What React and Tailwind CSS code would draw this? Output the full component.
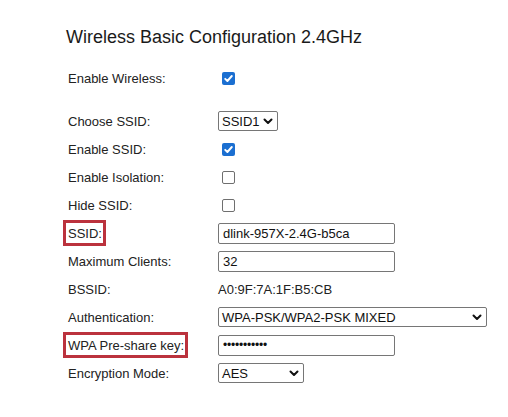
import React from "react";

function Chevron() {
  return (
    <svg width="10" height="7" viewBox="0 0 10 7" className="shrink-0">
      <path d="M1.5 1.5 L5 5 L8.5 1.5" fill="none" stroke="#111" strokeWidth="2" strokeLinecap="round" strokeLinejoin="round" />
    </svg>
  );
}

function Check({ checked }) {
  if (checked) {
    return (
      <span className="flex h-[13px] w-[13px] items-center justify-center rounded-[2px] bg-[#1b6fd1]">
        <svg width="11" height="11" viewBox="0 0 11 11">
          <path d="M2.2 5.8 L4.4 8 L8.8 3" fill="none" stroke="#fff" strokeWidth="1.9" strokeLinecap="round" strokeLinejoin="round" />
        </svg>
      </span>
    );
  }
  return <span className="block h-[13px] w-[13px] rounded-[2px] border border-[#6f6f6f] bg-white" />;
}

function Select({ value, width }) {
  return (
    <div
      className={`flex h-[20px] items-center justify-between rounded-[2px] border border-[#767676] bg-white pl-[3px] pr-[4px] text-[13px] text-[#111] ${width}`}
    >
      <span>{value}</span>
      <Chevron />
    </div>
  );
}

function TextBox({ children }) {
  return (
    <div className="flex h-[21px] w-[177px] items-center rounded-[2px] border border-[#767676] bg-white pl-[4px] text-[13px] text-[#111]">
      {children}
    </div>
  );
}

function Label({ children, boxed }) {
  return (
    <div className="w-[150px] shrink-0">
      <span className="relative inline-block">
        {children}
        {boxed && (
          <span className="absolute -left-[5px] -right-[4px] top-1/2 h-[26px] -translate-y-1/2 border-[3px] border-[#bb323d]" />
        )}
      </span>
    </div>
  );
}

function Row({ label, boxed, children }) {
  return (
    <div className="flex h-[28px] items-center">
      <Label boxed={boxed}>{label}</Label>
      <div className="flex items-center">{children}</div>
    </div>
  );
}

export default function App() {
  return (
    <div
      className="h-[417px] w-[508px] overflow-hidden bg-white text-[13px] leading-[15px] text-[#222]"
      style={{ fontFamily: '"Liberation Sans", Arial, sans-serif' }}
    >
      <div className="pl-[66px] pt-[28px] text-[18px] leading-[18px] text-[#1a1a1a]">
        Wireless Basic Configuration 2.4GHz
      </div>
      <div className="pl-[68px] pt-[18px]">
        <Row label="Enable Wireless:">
          <span className="ml-[4px]"><Check checked /></span>
        </Row>
        <div className="h-[15px]" />
        <Row label="Choose SSID:">
          <Select value="SSID1" width="w-[60px]" />
        </Row>
        <Row label="Enable SSID:">
          <span className="ml-[4px]"><Check checked /></span>
        </Row>
        <Row label="Enable Isolation:">
          <span className="ml-[4px]"><Check /></span>
        </Row>
        <Row label="Hide SSID:">
          <span className="ml-[4px]"><Check /></span>
        </Row>
        <Row label="SSID:" boxed>
          <TextBox>dlink-957X-2.4G-b5ca</TextBox>
        </Row>
        <Row label="Maximum Clients:">
          <TextBox>32</TextBox>
        </Row>
        <Row label="BSSID:">
          <span>A0:9F:7A:1F:B5:CB</span>
        </Row>
        <Row label="Authentication:">
          <Select value="WPA-PSK/WPA2-PSK MIXED" width="w-[269px]" />
        </Row>
        <Row label="WPA Pre-share key:" boxed>
          <TextBox>
            <span className="text-[12px] tracking-[-0.2px]">•••••••••••</span>
          </TextBox>
        </Row>
        <Row label="Encryption Mode:">
          <Select value="AES" width="w-[86px]" />
        </Row>
      </div>
    </div>
  );
}
